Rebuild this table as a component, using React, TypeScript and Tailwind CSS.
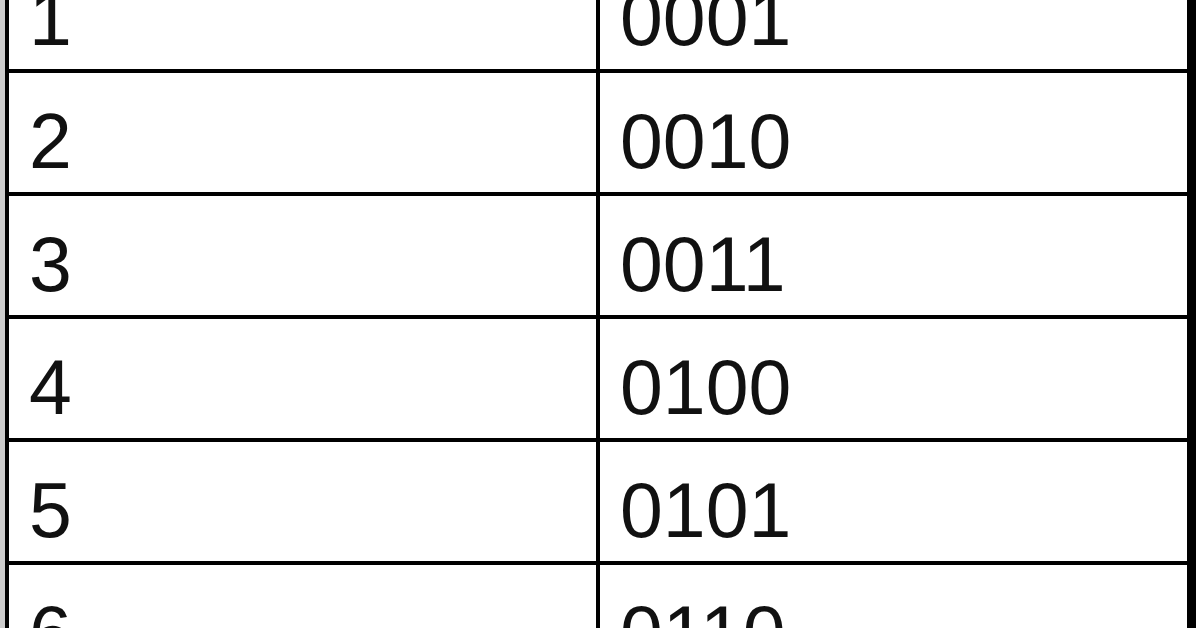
const rows = [
  { n: "1", bin: "0001" },
  { n: "2", bin: "0010" },
  { n: "3", bin: "0011" },
  { n: "4", bin: "0100" },
  { n: "5", bin: "0101" },
  { n: "6", bin: "0110" },
];

export default function App() {
  return (
    <div className="flex h-[628px] w-[1196px] overflow-hidden bg-white font-['Liberation_Sans',Arial,sans-serif] text-[#111]">
      <div className="w-[5px] shrink-0 bg-[#cbcbcb]" />
      <div className="-mt-[50px] flex-1 border-l-4 border-r-[9px] border-black">
        {rows.map((row) => (
          <div key={row.n} className="flex h-[123px] border-b-4 border-black">
            <div className="w-[591px] shrink-0 border-r-4 border-black pl-5 pt-[30px] text-[77px] leading-none">
              {row.n}
            </div>
            <div className="flex-1 pl-5 pt-[30px] text-[77px] leading-none">{row.bin}</div>
          </div>
        ))}
      </div>
    </div>
  );
}
